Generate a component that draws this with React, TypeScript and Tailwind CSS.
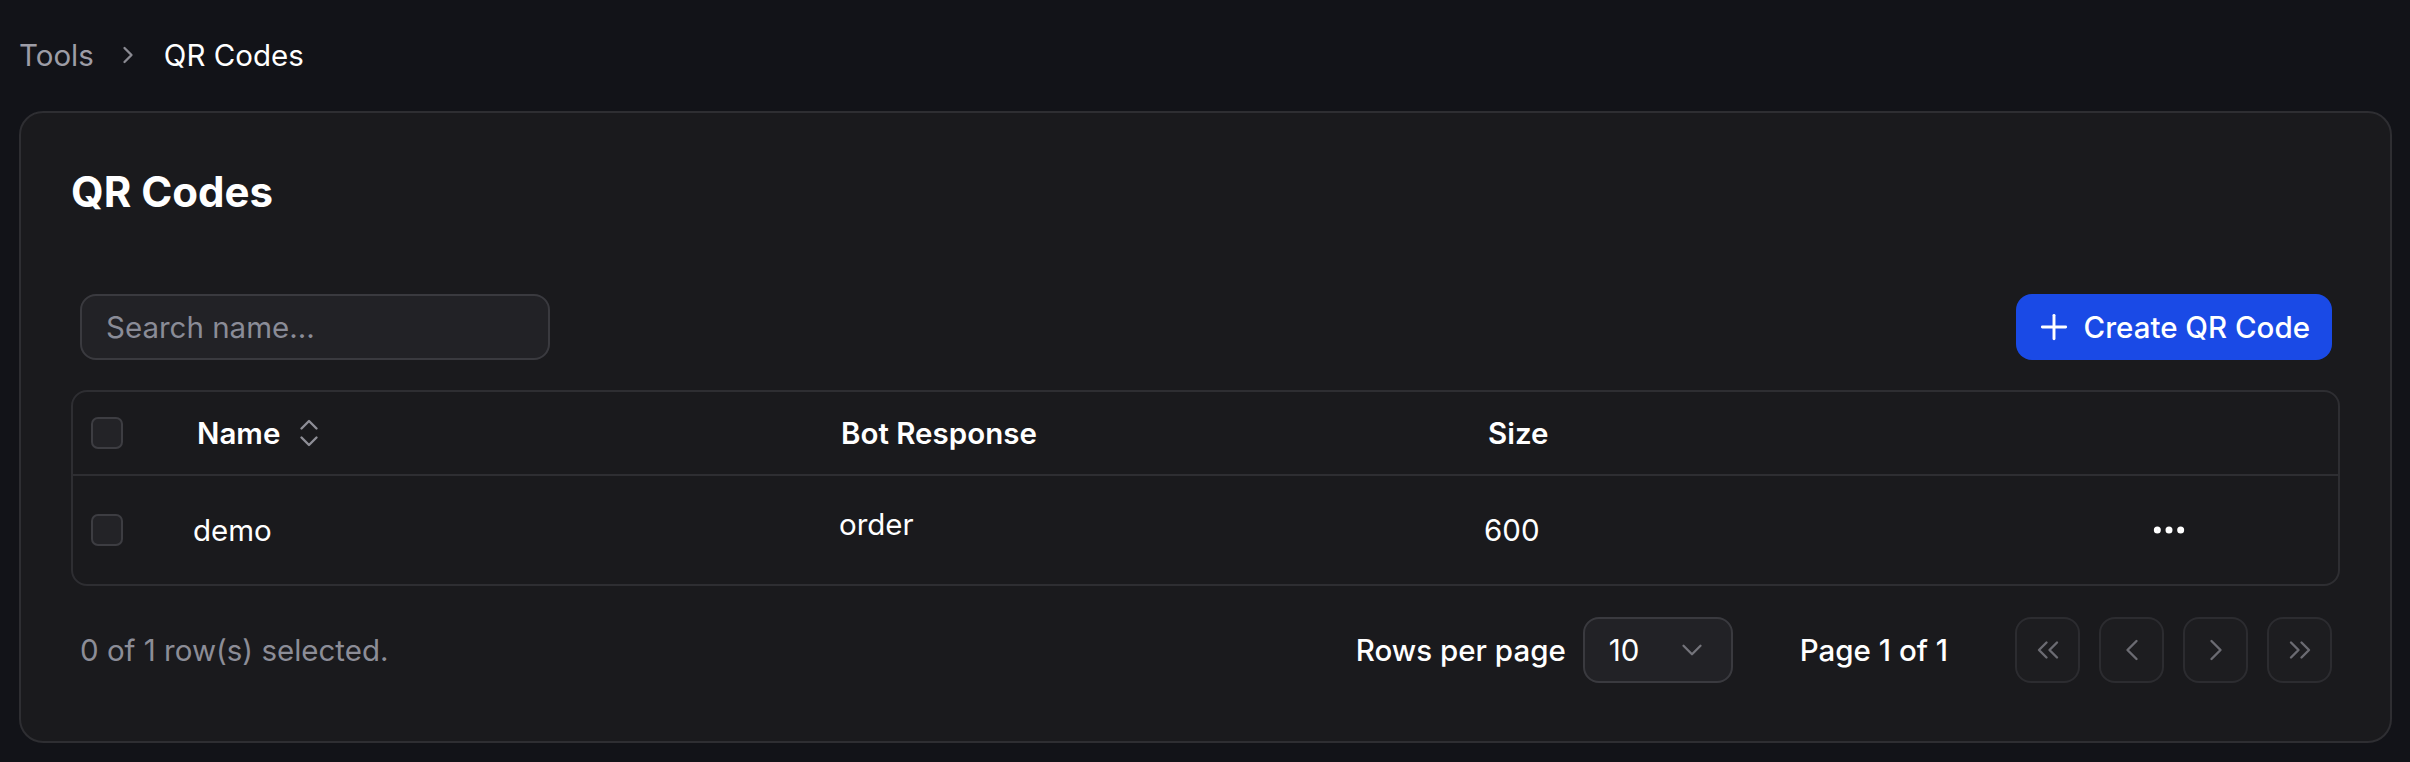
import React from "react";
import {
  ChevronRight,
  ChevronsUpDown,
  Ellipsis,
  Plus,
  ChevronDown,
  ChevronLeft,
  ChevronsLeft,
  ChevronsRight,
} from "lucide-react";

function Checkbox() {
  return (
    <div className="w-[32px] h-[32px] rounded-[7px] border-2 border-[#3d3d42] bg-[#232327]" />
  );
}

function PageButton({ children }: { children: React.ReactNode }) {
  return (
    <button className="w-[65px] h-[66px] flex items-center justify-center rounded-[16px] border-2 border-[#2c2c30] bg-[#1d1d20] text-[#6b6b72]">
      {children}
    </button>
  );
}

export default function App() {
  return (
    <div className="min-h-screen bg-[#121318] pl-[19px] pr-[18px] font-['Inter',sans-serif] text-white">
      {/* Breadcrumb */}
      <nav className="pt-[35px] flex items-center gap-[22px] text-[29.5px] leading-[40px]">
        <span className="text-[#9d9da6]">Tools</span>
        <ChevronRight size={28} strokeWidth={2} className="text-[#8a8a92] -ml-[2px]" />
        <span className="text-white">QR Codes</span>
      </nav>

      {/* Card */}
      <div className="mt-[36px] rounded-[24px] border-2 border-[#2e2e32] bg-[#1a1a1d] pt-[51px] px-[50px] pb-[58px]">
        <h1 className="text-[42px] leading-[56px] font-bold">QR Codes</h1>

        {/* Toolbar */}
        <div className="mt-[74px] flex items-center justify-between pl-[9px] pr-[8px]">
          <input
            placeholder="Search name..."
            className="w-[470px] h-[66px] rounded-[16px] border-2 border-[#3a3a3f] bg-[#222226] px-[24px] text-[29.5px] text-white placeholder:text-[#8a8c97] outline-none"
          />
          <button className="h-[66px] flex items-center gap-[10px] rounded-[16px] bg-[#1a4ae6] pl-[18px] pr-[22px] text-[29.5px] font-medium text-white">
            <Plus size={40} strokeWidth={1.75} />
            <span>Create QR Code</span>
          </button>
        </div>

        {/* Table */}
        <div className="mt-[30px] rounded-[16px] border-2 border-[#2e2e32]">
          <div className="grid grid-cols-[104px_646px_645px_1fr_238px] h-[84px] items-center border-b-2 border-[#2e2e32] text-[29.5px] leading-[40px] font-semibold">
            <div className="pl-[18px]">
              <Checkbox />
            </div>
            <div className="pl-[20px] flex items-center gap-[11px]">
              <span>Name</span>
              <ChevronsUpDown size={36} strokeWidth={1.6} className="text-[#8e8e96]" />
            </div>
            <div className="pl-[18px]">Bot Response</div>
            <div className="pl-[20px]">Size</div>
            <div />
          </div>
          <div className="grid grid-cols-[104px_646px_645px_1fr_238px] h-[108px] items-center text-[29.5px] leading-[40px]">
            <div className="pl-[18px]">
              <Checkbox />
            </div>
            <div className="pl-[16px]">demo</div>
            <div className="pl-[16px] pb-[12px]">order</div>
            <div className="pl-[16px]">600</div>
            <div className="pl-[49px] flex items-center">
              <Ellipsis size={40} strokeWidth={2.2} />
            </div>
          </div>
        </div>

        {/* Footer */}
        <div className="mt-[31px] h-[66px] flex items-center justify-between pl-[9px] pr-[8px] text-[29.5px] leading-[40px]">
          <div className="text-[#8c8d97]">0 of 1 row(s) selected.</div>
          <div className="flex items-center">
            <span className="font-medium">Rows per page</span>
            <div className="ml-[17px] w-[150px] h-[66px] flex items-center justify-between rounded-[16px] border-2 border-[#3a3a3f] bg-[#222226] pl-[24px] pr-[22px]">
              <span>10</span>
              <ChevronDown size={34} strokeWidth={1.6} className="text-[#74747b]" />
            </div>
            <span className="ml-[67px] font-medium">Page 1 of 1</span>
            <div className="ml-[67px] flex items-center gap-[19px]">
              <PageButton>
                <ChevronsLeft size={36} strokeWidth={1.6} />
              </PageButton>
              <PageButton>
                <ChevronLeft size={36} strokeWidth={1.6} />
              </PageButton>
              <PageButton>
                <ChevronRight size={36} strokeWidth={1.6} />
              </PageButton>
              <PageButton>
                <ChevronsRight size={36} strokeWidth={1.6} />
              </PageButton>
            </div>
          </div>
        </div>
      </div>
    </div>
  );
}
